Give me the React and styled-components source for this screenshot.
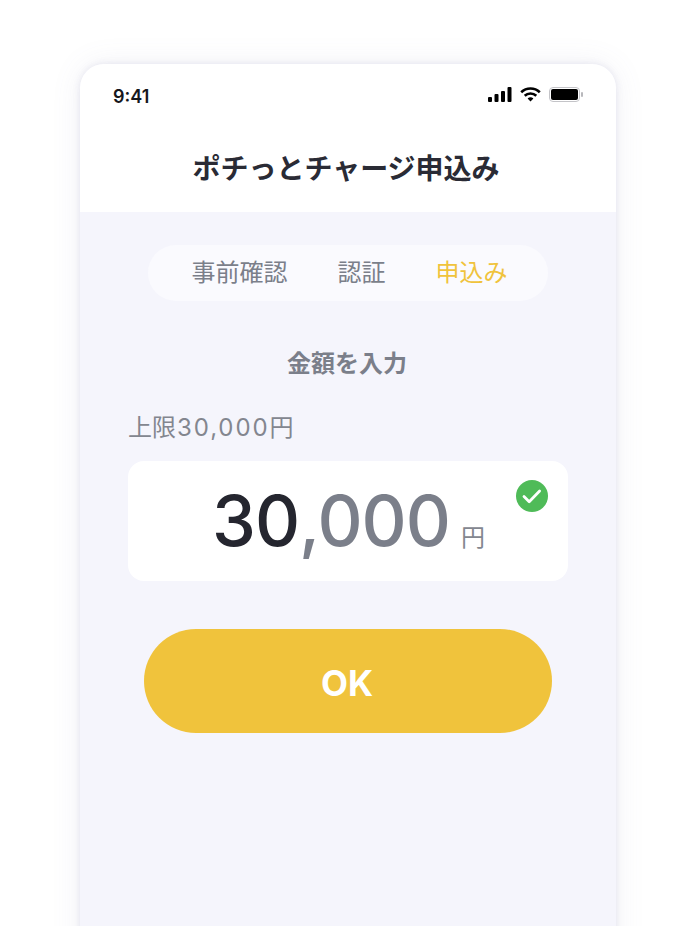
import React from "react";
import styled, { createGlobalStyle } from "styled-components";

const Global = createGlobalStyle`
  html, body {
    margin: 0;
    padding: 0;
    background: #fff;
  }
  body {
    font-family: Inter, "Noto Sans CJK JP", sans-serif;
  }
`;

const Page = styled.div`
  height: 926px;
  overflow: hidden;
  padding-top: 64px;
  box-sizing: border-box;
`;
const Phone = styled.div`
  width: 536px;
  height: 900px;
  margin: 0 auto;
  border-radius: 24px 24px 0 0;
  background: #f5f5fc;
  box-shadow: 0 0 7px rgba(120, 120, 170, 0.16), 0 0 30px rgba(120, 120, 170, 0.1);
  overflow: hidden;
`;
const Header = styled.header`
  background: #fff;
  height: 148px;
`;
const StatusBar = styled.div`
  display: flex;
  align-items: center;
  justify-content: space-between;
  padding: 21px 33px 0;
  height: 22px;
`;
const Time = styled.span`
  font-size: 18px;
  font-weight: 600;
  color: #16171c;
`;
const Icons = styled.div`
  display: flex;
  align-items: center;
  gap: 8px;
  margin-top: -3px;
`;
const Title = styled.h1`
  margin: 41px 0 0;
  padding-right: 4px;
  text-align: center;
  font-size: 28px;
  line-height: 42px;
  font-weight: 700;
  color: #2a2b35;
`;
const Main = styled.main`
  display: flex;
  flex-direction: column;
  align-items: center;
  padding-top: 33px;
`;
const Tabs = styled.div`
  box-sizing: border-box;
  width: 400px;
  height: 56px;
  padding-left: 3px;
  border-radius: 28px;
  background: #fafafe;
  display: flex;
  align-items: center;
  justify-content: center;
  gap: 50px;
`;
const Tab = styled.span`
  font-size: 24px;
  line-height: 56px;
  color: ${(p) => (p.$active ? "#f0c33c" : "#7b7f8a")};
`;
const Heading = styled.h2`
  margin: 45px 2px 0 0;
  font-size: 24px;
  line-height: 36px;
  font-weight: 700;
  color: #7b7f8a;
`;
const Limit = styled.div`
  width: 440px;
  margin-top: 28px;
  font-size: 24px;
  line-height: 36px;
  color: #83868f;
`;
const LimitValue = styled.span`
  letter-spacing: 1.9px;
  margin-left: 1px;
`;
const AmountCard = styled.div`
  position: relative;
  box-sizing: border-box;
  width: 440px;
  height: 120px;
  margin-top: 15px;
  padding-left: 1px;
  border-radius: 16px;
  background: #fff;
  display: flex;
  align-items: baseline;
  justify-content: center;
  line-height: 120px;
`;
const Digits = styled.span`
  font-size: 70px;
  font-weight: 500;
  letter-spacing: -1px;
  color: ${(p) => (p.$muted ? "#7b7f8a" : "#25262f")};
`;
const Unit = styled.span`
  margin-left: 11px;
  font-size: 24px;
  color: #83868f;
`;
const Check = styled.svg`
  position: absolute;
  top: 19px;
  right: 20px;
`;
const OkButton = styled.button`
  width: 408px;
  height: 104px;
  margin-top: 48px;
  padding: 3px 2px 0 0;
  border: none;
  border-radius: 52px;
  background: #f0c33c;
  color: #fff;
  font-family: inherit;
  font-size: 35px;
  font-weight: 700;
`;

function StatusIcons() {
  return (
    <Icons>
      <svg width="24" height="15" viewBox="0 0 24 15" fill="#000">
        <rect x="0" y="10" width="4" height="5" rx="1" />
        <rect x="6.5" y="7" width="4" height="8" rx="1" />
        <rect x="13" y="4" width="4" height="11" rx="1" />
        <rect x="19.5" y="0" width="4" height="15" rx="1" />
      </svg>
      <svg width="21" height="15" viewBox="0 0 21 15" fill="none" stroke="#000" strokeWidth="2.6">
        <path d="M1.2 5.2a13.4 13.4 0 0 1 18.6 0" />
        <path d="M4.7 8.8a8.4 8.4 0 0 1 11.6 0" />
        <path d="M10.5 14.6l-2.9-3a4.1 4.1 0 0 1 5.8 0z" fill="#000" stroke="none" />
      </svg>
      <svg width="34" height="15" viewBox="0 0 34 15" fill="none">
        <rect x="0.5" y="0.5" width="30" height="14" rx="3.5" stroke="#c4c4c8" />
        <rect x="2" y="2" width="27" height="11" rx="2" fill="#000" />
        <rect x="32" y="5" width="2" height="5" rx="1" fill="#b8b8bc" />
      </svg>
    </Icons>
  );
}

export default function App() {
  return (
    <Page>
      <Global />
      <Phone>
        <Header>
          <StatusBar>
            <Time>9:41</Time>
            <StatusIcons />
          </StatusBar>
          <Title>ポチっとチャージ申込み</Title>
        </Header>
        <Main>
          <Tabs>
            <Tab>事前確認</Tab>
            <Tab>認証</Tab>
            <Tab $active>申込み</Tab>
          </Tabs>
          <Heading>金額を入力</Heading>
          <Limit>
            上限<LimitValue>30,000</LimitValue>円
          </Limit>
          <AmountCard>
            <Digits>30</Digits>
            <Digits $muted>,000</Digits>
            <Unit>円</Unit>
            <Check width="32" height="32" viewBox="0 0 32 32">
              <circle cx="16" cy="16" r="16" fill="#4fbb58" />
              <path d="M8 16.5l5.2 5.2L23.6 11" fill="none" stroke="#fff" strokeWidth="2.8" strokeLinecap="round" strokeLinejoin="round" />
            </Check>
          </AmountCard>
          <OkButton>OK</OkButton>
        </Main>
      </Phone>
    </Page>
  );
}
